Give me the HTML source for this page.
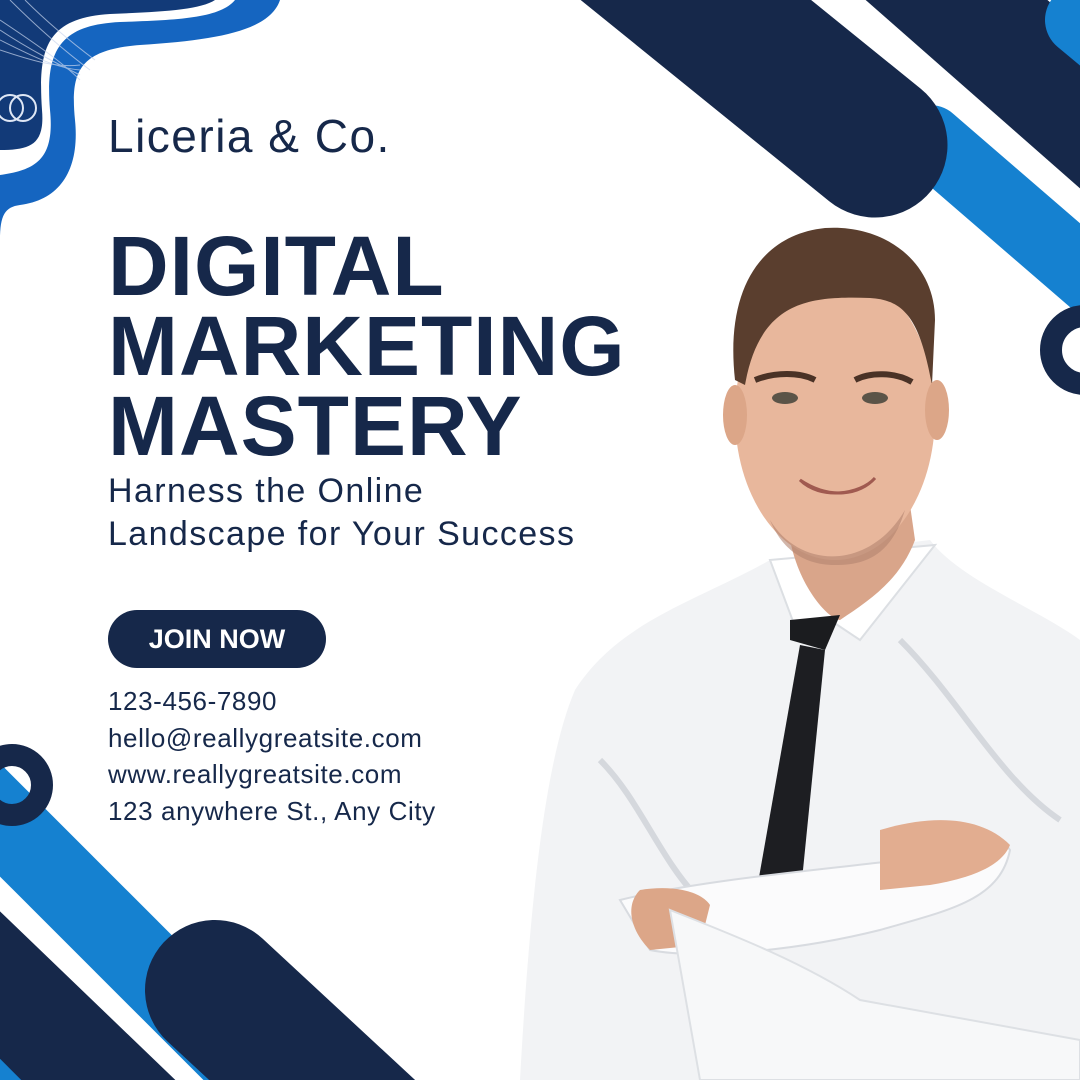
<!DOCTYPE html>
<html><head><meta charset="utf-8"><style>
html,body{margin:0;padding:0;overflow:hidden}
body{width:1080px;height:1080px;position:relative;overflow:hidden;background:#fff;font-family:"Liberation Sans",sans-serif;color:#16284a}
.t{position:absolute;left:108px;white-space:nowrap}
</style></head><body>
<svg width="1080" height="1080" style="position:absolute;left:0;top:0;overflow:hidden">
<path d="M0,0 H280 C270,30 220,40 140,45 C80,50 70,70 75,120 C80,170 60,200 20,205 C5,207 0,215 0,240 Z" fill="#1565c0"/>
<path d="M0,0 H235 C220,18 180,20 120,22 C60,25 45,50 50,110 C55,160 35,170 0,175 Z" fill="#fff"/>
<path d="M0,0 H215 C200,10 160,12 110,14 C45,18 38,50 42,110 C45,145 30,150 0,150 Z" fill="#123a78"/>
<g stroke="#c9d6ee" stroke-width="1" fill="none" opacity=".7">
<path d="M0,20 C30,40 60,60 80,80"/><path d="M0,30 C30,50 60,65 80,75"/><path d="M0,40 C30,55 55,68 80,70"/><path d="M0,50 C30,60 55,68 80,65"/><path d="M10,0 C40,30 70,55 90,70"/><path d="M25,0 C50,25 75,45 95,60"/>
</g>
<circle cx="10" cy="108" r="13" fill="none" stroke="#dfe7f5" stroke-width="2"/>
<circle cx="23" cy="108" r="13" fill="none" stroke="#dfe7f5" stroke-width="2"/>
<line x1="930" y1="140" x2="1150" y2="330" stroke="#1581d0" stroke-width="70" stroke-linecap="round"/>
<line x1="560" y1="-110" x2="875" y2="145" stroke="#16284a" stroke-width="145" stroke-linecap="round"/>
<line x1="820" y1="-120" x2="1150" y2="170" stroke="#16284a" stroke-width="120"/>
<line x1="1080" y1="20" x2="1200" y2="120" stroke="#1581d0" stroke-width="70" stroke-linecap="round"/>
<circle cx="1085" cy="350" r="34" fill="none" stroke="#16284a" stroke-width="22"/>
<line x1="-40" y1="780" x2="300" y2="1120" stroke="#1581d0" stroke-width="80"/>
<line x1="-60" y1="930" x2="200" y2="1180" stroke="#16284a" stroke-width="110"/>
<line x1="-40" y1="1040" x2="60" y2="1140" stroke="#1581d0" stroke-width="30"/>
<line x1="215" y1="990" x2="420" y2="1180" stroke="#16284a" stroke-width="140" stroke-linecap="round"/>
<circle cx="12" cy="785" r="30" fill="none" stroke="#16284a" stroke-width="22"/>
<path d="M770,560 C700,600 620,620 575,690 C545,760 530,900 520,1080 H1080 V640 C1040,610 960,580 930,540 Z" fill="#f2f3f5"/>
<path d="M600,760 C640,800 660,860 700,900 M900,640 C960,700 1000,780 1060,820" stroke="#d5d8dd" stroke-width="6" fill="none"/>
<path d="M770,560 L800,640 L830,620 L860,640 L935,545 Z" fill="#fff" stroke="#dcdfe3" stroke-width="2"/>
<path d="M790,540 C800,590 830,620 840,620 C870,600 900,580 915,540 L905,470 L790,470 Z" fill="#d9a58a"/>
<path d="M790,620 L840,615 L825,650 L790,640 Z" fill="#1b1c1f"/>
<path d="M800,645 L825,650 L800,900 L755,900 Z" fill="#1d1e22"/>
<ellipse cx="835" cy="415" rx="100" ry="145" fill="#e8b79c"/>
<path d="M735,380 C725,290 760,235 825,228 C885,224 935,262 935,320 L932,385 C920,320 905,300 870,298 C810,296 760,300 745,385 Z" fill="#5a3e2e"/>
<ellipse cx="735" cy="415" rx="12" ry="30" fill="#dca688"/><ellipse cx="937" cy="410" rx="12" ry="30" fill="#dca688"/>
<path d="M770,520 C800,570 870,570 905,510 C890,560 860,565 835,565 C800,565 780,545 770,520 Z" fill="#b28370" opacity=".6"/>
<path d="M800,480 C830,500 860,495 875,478 C860,495 820,500 800,480 Z" fill="#fff" stroke="#a05a50" stroke-width="3"/>
<ellipse cx="785" cy="398" rx="13" ry="6" fill="#5b5448"/><ellipse cx="875" cy="398" rx="13" ry="6" fill="#5b5448"/>
<path d="M755,380 C775,372 800,372 815,380 M855,380 C870,372 895,372 912,382" stroke="#4a3226" stroke-width="6" fill="none"/>
<path d="M620,900 C700,880 820,870 900,860 C950,850 990,820 1010,850 C1000,900 950,910 880,930 C800,950 700,960 650,950 Z" fill="#fbfbfc" stroke="#d8dbe0" stroke-width="2"/>
<path d="M880,830 C930,815 980,815 1010,845 C1000,870 960,880 930,885 L880,890 Z" fill="#e2ad90"/>
<path d="M640,890 C670,885 700,890 710,905 L700,945 L650,950 C630,930 625,905 640,890 Z" fill="#dca688"/>
<path d="M670,910 C720,930 800,960 860,1000 L1080,1040 V1080 H700 Z" fill="#f7f8f9" stroke="#dde0e4" stroke-width="2"/>
</svg>
<div class="t" style="top:108px;font-size:46px;letter-spacing:1.5px;line-height:56px">Liceria &amp; Co.</div>
<div class="t" style="top:226px;font-size:84px;font-weight:bold;line-height:80px;letter-spacing:1px">DIGITAL<br>MARKETING<br>MASTERY</div>
<div class="t" style="top:470px;font-size:34px;line-height:43px;letter-spacing:1.4px">Harness the Online<br>Landscape for Your Success</div>
<div style="position:absolute;left:108px;top:610px;width:218px;height:58px;border-radius:29px;background:#16284a;color:#fff;font-weight:bold;font-size:27px;line-height:58px;text-align:center">JOIN NOW</div>
<div class="t" style="top:683px;font-size:26px;line-height:36.5px;letter-spacing:0.6px">123-456-7890<br>hello@reallygreatsite.com<br>www.reallygreatsite.com<br>123 anywhere St., Any City</div>
</body></html>
